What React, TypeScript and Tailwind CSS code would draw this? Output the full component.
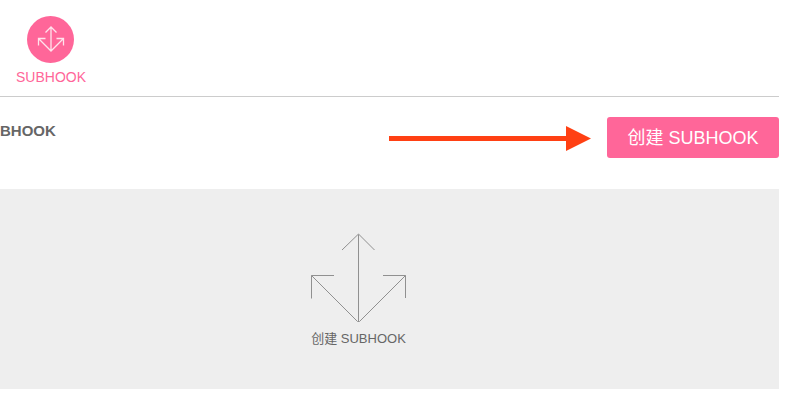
const sans = "font-['Liberation_Sans','Noto_Sans_CJK_SC',sans-serif]";

function NavIcon() {
  return (
    <svg viewBox="0 0 48 47" className="h-[47px] w-12" aria-hidden="true">
      <circle cx="23.5" cy="23.5" r="23.5" fill="#ff6699" />
      <path
        d="M24 35V11M18.5 16.5L24 11L29.5 16.5M11.5 29.5V22.5H18.5M11.5 22.5L24 35L36.5 22.5M29.5 22.5H36.5V29.5"
        fill="none"
        stroke="#ffe3ec"
        strokeWidth="1.3"
      />
    </svg>
  );
}

function ForkIcon() {
  return (
    <svg viewBox="0 0 96 90" className="h-[90px] w-[96px]" fill="none" stroke="#909090" aria-hidden="true">
      <path d="M47.5 88.5V1.5M31 17L47.5 1L63.5 17M0.5 65.5V42.5H23M0.5 42.5L46.5 88.5H48.5L94.5 42.5M72 42.5H94.5V65" />
    </svg>
  );
}

function CalloutArrow() {
  return (
    <svg viewBox="0 0 202 26" className="mt-2 mr-4 h-[26px] w-[202px] shrink-0" fill="#ff4013" aria-hidden="true">
      <path d="M0 11H177V1L202 13.5L177 26V16H0Z" />
    </svg>
  );
}

export default function App() {
  return (
    <div className={`${sans} bg-white pr-[22px] text-[#666]`}>
      <nav className="flex border-b border-[#ccc] px-4 pt-4 pb-[9px]">
        <a href="#subhook" className="flex flex-col items-center gap-1 text-sm text-[#ff6699]">
          <NavIcon />
          <span>SUBHOOK</span>
        </a>
      </nav>
      <main>
        <header className="flex items-start pt-5 pb-[31px]">
          <h1 className="flex-1 pt-0.5 text-[15px] leading-6 font-bold">BHOOK</h1>
          <CalloutArrow />
          <button type="button" className="h-[41px] w-[172px] shrink-0 rounded-[3px] bg-[#ff6699] text-lg text-white">
            创建 SUBHOOK
          </button>
        </header>
        <section className="flex h-[200px] flex-col items-center gap-1.5 bg-[#eee] pt-11 pr-[62px]">
          <ForkIcon />
          <p className="text-[13px] leading-5">创建 SUBHOOK</p>
        </section>
      </main>
    </div>
  );
}
